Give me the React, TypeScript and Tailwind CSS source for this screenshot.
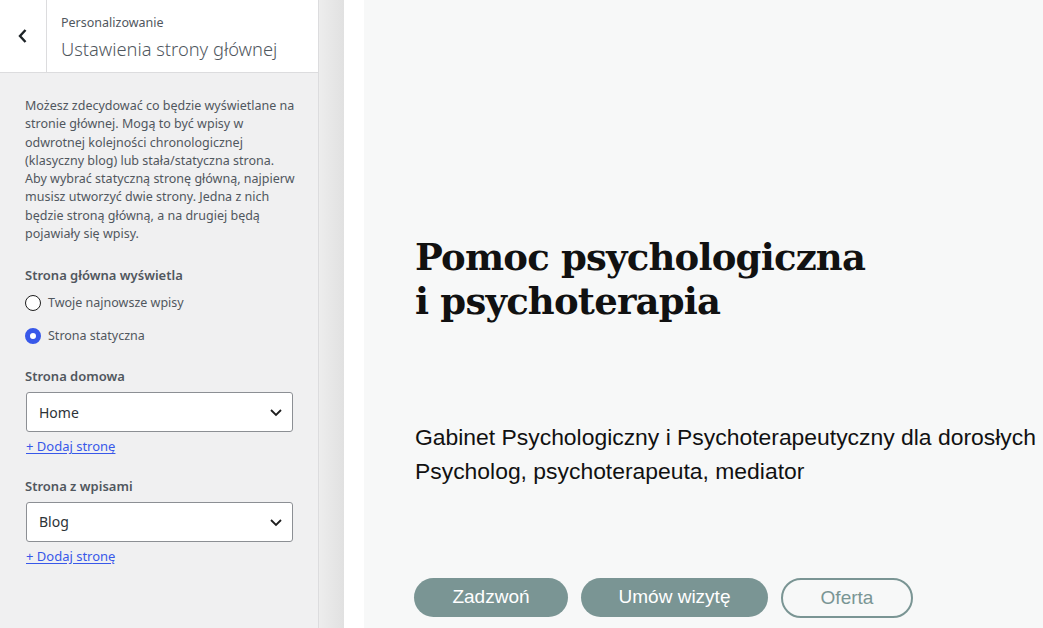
import React, { useState } from "react";

const descLines = [
  "Możesz zdecydować co będzie wyświetlane na",
  "stronie głównej. Mogą to być wpisy w",
  "odwrotnej kolejności chronologicznej",
  "(klasyczny blog) lub stała/statyczna strona.",
  "Aby wybrać statyczną stronę główną, najpierw",
  "musisz utworzyć dwie strony. Jedna z nich",
  "będzie stroną główną, a na drugiej będą",
  "pojawiały się wpisy.",
];

function Chevron() {
  return (
    <svg width="14" height="14" viewBox="0 0 14 14" fill="none">
      <path d="M2 5l5 5 5-5" stroke="#1e1e1e" strokeWidth="1.8" />
    </svg>
  );
}

function SelectBox({ value }: { value: string }) {
  return (
    <div className="mt-[7px] ml-px flex h-[40px] w-[267px] items-center justify-between rounded-[3px] border border-[#8c8f94] bg-white pl-[12px] pr-[9px] text-[14px] text-[#2c3338]">
      <span>{value}</span>
      <Chevron />
    </div>
  );
}

function AddLink() {
  return (
    <a href="#" className="mt-[5px] ml-px block w-fit text-[13px] text-[#3858e9] underline underline-offset-2">
      + Dodaj stronę
    </a>
  );
}

export default function App() {
  const [mode, setMode] = useState("static");

  return (
    <div className="flex h-[628px] w-[1043px] overflow-hidden font-['Noto_Sans',sans-serif]">
      {/* sidebar */}
      <div className="flex w-[319px] shrink-0 flex-col border-r border-[#dcdcde] bg-[#f0f0f1]">
        <div className="flex h-[73px] shrink-0 border-b border-[#dcdcde] bg-white">
          <button className="flex w-[47px] items-center justify-center border-r border-[#dcdcde]">
            <svg width="12" height="16" viewBox="0 0 12 16" fill="none">
              <path d="M8.5 2L3 8l5.5 6" stroke="#1d2327" strokeWidth="2.4" />
            </svg>
          </button>
          <div className="pl-[14px] pt-[13px]">
            <div className="text-[12.5px] leading-[19px] text-[#50575e]">Personalizowanie</div>
            <div className="mt-[4px] text-[18.3px] font-light leading-[26px] text-[#50575e]">Ustawienia strony głównej</div>
          </div>
        </div>

        <div className="px-[25px] pt-[24px] text-[12.5px] text-[#50575e]">
          <p className="leading-[18.3px]">
            {descLines.map((l) => (
              <span key={l} className="block whitespace-nowrap">{l}</span>
            ))}
          </p>

          <div className="mt-[23px] text-[13px] font-semibold leading-[18px]">Strona główna wyświetla</div>
          <label className="mt-[10px] flex items-center gap-[7px]" onClick={() => setMode("latest")}>
            <span className={mode === "latest" ? "h-[16px] w-[16px] rounded-full border-[5px] border-[#3858e9] bg-white" : "h-[16px] w-[16px] rounded-full border border-[#1e1e1e] bg-white"} />
            <span className="leading-[18px]">Twoje najnowsze wpisy</span>
          </label>
          <label className="mt-[15px] flex items-center gap-[7px]" onClick={() => setMode("static")}>
            <span className={mode === "static" ? "h-[16px] w-[16px] rounded-full border-[5px] border-[#3858e9] bg-white" : "h-[16px] w-[16px] rounded-full border border-[#1e1e1e] bg-white"} />
            <span className="leading-[18px]">Strona statyczna</span>
          </label>

          <div className="mt-[22px] text-[13px] font-semibold leading-[18px]">Strona domowa</div>
          <SelectBox value="Home" />
          <AddLink />

          <div className="mt-[20px] text-[13px] font-semibold leading-[18px]">Strona z wpisami</div>
          <SelectBox value="Blog" />
          <AddLink />
        </div>
      </div>

      {/* gutter */}
      <div className="w-[25px] shrink-0 bg-gradient-to-r from-[#ededed] to-[#e1e1e1]" />
      <div className="w-[20px] shrink-0 bg-white" />

      {/* preview */}
      <div className="flex-1 bg-[#f7f8f8] pl-[51px] pt-[235px]">
        <h1 className="font-['DejaVu_Serif',serif] text-[37px] font-bold leading-[44px] tracking-[-0.8px] text-[#111]">
          Pomoc psychologiczna
          <br />i psychoterapia
        </h1>
        <div className="mt-[97px] whitespace-nowrap font-['Liberation_Sans',sans-serif] text-[22.9px] leading-[34px] text-[#111]">
          <p>Gabinet Psychologiczny i Psychoterapeutyczny dla dorosłych</p>
          <p>Psycholog, psychoterapeuta, mediator</p>
        </div>
        <div className="-ml-px mt-[90px] flex gap-[13px] font-['Liberation_Sans',sans-serif] text-[19px]">
          <button className="h-[39px] w-[154px] rounded-full bg-[#7a9594] text-white">Zadzwoń</button>
          <button className="h-[39px] w-[187px] rounded-full bg-[#7a9594] text-white">Umów wizytę</button>
          <button className="h-[40px] w-[132px] rounded-full border-2 border-[#7a9594] text-[#7a9594]">Oferta</button>
        </div>
      </div>
    </div>
  );
}
